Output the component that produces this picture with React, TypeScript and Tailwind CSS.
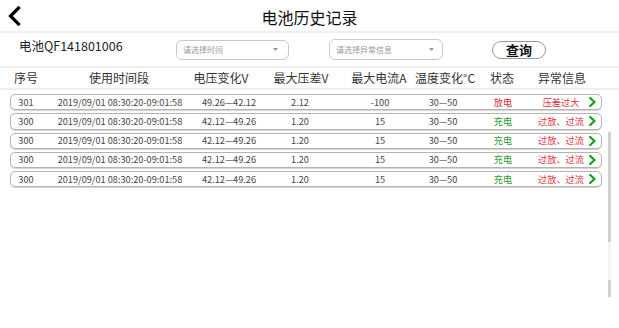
import React from "react";

const rows = [
  { id: "301", time: "2019/09/01 08:30:20-09:01:58", v: "49.26—42.12", dv: "2.12", a: "-100", t: "30—50", s: "放电", info: "压差过大" },
  { id: "300", time: "2019/09/01 08:30:20-09:01:58", v: "42.12—49.26", dv: "1.20", a: "15", t: "30—50", s: "充电", info: "过放、过流" },
  { id: "300", time: "2019/09/01 08:30:20-09:01:58", v: "42.12—49.26", dv: "1.20", a: "15", t: "30—50", s: "充电", info: "过放、过流" },
  { id: "300", time: "2019/09/01 08:30:20-09:01:58", v: "42.12—49.26", dv: "1.20", a: "15", t: "30—50", s: "充电", info: "过放、过流" },
  { id: "300", time: "2019/09/01 08:30:20-09:01:58", v: "42.12—49.26", dv: "1.20", a: "15", t: "30—50", s: "充电", info: "过放、过流" },
];

function Caret() {
  return (
    <svg width="5" height="3" viewBox="0 0 5 3">
      <path d="M0 0 L5 0 L2.5 3 Z" fill="#999" />
    </svg>
  );
}

function Chevron() {
  return (
    <svg width="7" height="10" viewBox="0 0 7 10">
      <path d="M1.2 1 L5.5 5 L1.2 9" fill="none" stroke="#12a012" strokeWidth="2.2" strokeLinecap="round" strokeLinejoin="round" />
    </svg>
  );
}

export default function App() {
  return (
    <div
      className="w-[619px] h-[328px] bg-white overflow-hidden flex flex-col"
      style={{ fontFamily: '"Noto Sans CJK SC", "Noto Sans", sans-serif' }}
    >
      {/* Title bar */}
      <div className="h-[31px] flex items-center">
        <div className="w-[40px] pl-[7px] flex items-center">
          <svg width="15" height="20" viewBox="0 0 15 20">
            <path d="M11.5 2 L3.5 10 L11.5 18" fill="none" stroke="#000" strokeWidth="3.2" strokeLinecap="square" />
          </svg>
        </div>
        <div className="flex-1 text-center text-[16px] text-[#111] leading-none pt-[2px]">电池历史记录</div>
        <div className="w-[40px]" />
      </div>
      <div className="h-[2px] bg-[#efefef]" />

      {/* Filter row */}
      <div className="h-[33px] flex items-center pl-[19px]">
        <div className="w-[157px] text-[12.5px] text-[#222] leading-none -mt-[7px]">电池QF141801006</div>
        <div className="w-[113px] h-[20px] border border-[#c8c8c8] rounded-[6px] flex items-center justify-between pl-[6px] pr-[10px]">
          <span className="text-[8px] text-[#999] leading-none">请选择时间</span>
          <Caret />
        </div>
        <div className="w-[114px] h-[21px] ml-[40px] border border-[#c8c8c8] rounded-[6px] flex items-center justify-between pl-[6px] pr-[8px]">
          <span className="text-[8px] text-[#999] leading-none">请选择异常信息</span>
          <Caret />
        </div>
        <div className="w-[54px] h-[18px] ml-[49px] border border-[#999] rounded-full flex items-center justify-center text-[13px] font-bold text-[#111] leading-none">
          查询
        </div>
      </div>
      <div className="h-[2px] bg-[#efefef]" />

      {/* Header row */}
      <div className="h-[20px] flex items-center text-[12px] text-[#333] leading-none">
        <div className="w-[52px] text-center">序号</div>
        <div className="w-[134px] text-center">使用时间段</div>
        <div className="w-[70px] text-center">电压变化V</div>
        <div className="w-[90px] text-center">最大压差V</div>
        <div className="w-[66px] text-center">最大电流A</div>
        <div className="w-[66px] text-center">温度变化°C</div>
        <div className="w-[48px] text-center">状态</div>
        <div className="w-[72px] text-center">异常信息</div>
      </div>
      <div className="h-[2px] bg-[#efefef]" />

      {/* List */}
      <div className="flex">
        <div className="ml-[10px] w-[592px] pt-[4px] flex flex-col gap-[3px]">
          {rows.map((r, i) => (
            <div
              key={i}
              className="h-[16.3px] border border-[#b4b4b4] rounded-[5px] shadow-[0_1px_1px_rgba(0,0,0,0.18)] flex items-center text-[9.2px] text-[#444] leading-none"
            >
              <div className="w-[30px] text-center">{r.id}</div>
              <div className="w-[158px] text-center">{r.time}</div>
              <div className="w-[60px] text-center">{r.v}</div>
              <div className="w-[82px] text-center">{r.dv}</div>
              <div className="w-[78px] text-center">{r.a}</div>
              <div className="w-[48px] text-center">{r.t}</div>
              <div className={`w-[72px] text-center ${r.s === "放电" ? "text-[#e0303c]" : "text-[#2e9a2e]"}`}>{r.s}</div>
              <div className="w-[44px] flex justify-center">
                <span className="text-[#e0303c] whitespace-nowrap">{r.info}</span>
              </div>
              <div className="flex-1 flex justify-center pl-[1px]">
                <Chevron />
              </div>
            </div>
          ))}
        </div>
        <div className="ml-[6px] mt-[42px] w-[3px] flex flex-col">
          <div className="h-[110px] bg-[#cfcfcf]" />
          <div className="h-[38px] bg-[#f4f4f4]" />
          <div className="h-[17px] bg-[#cfcfcf]" />
        </div>
      </div>
    </div>
  );
}
